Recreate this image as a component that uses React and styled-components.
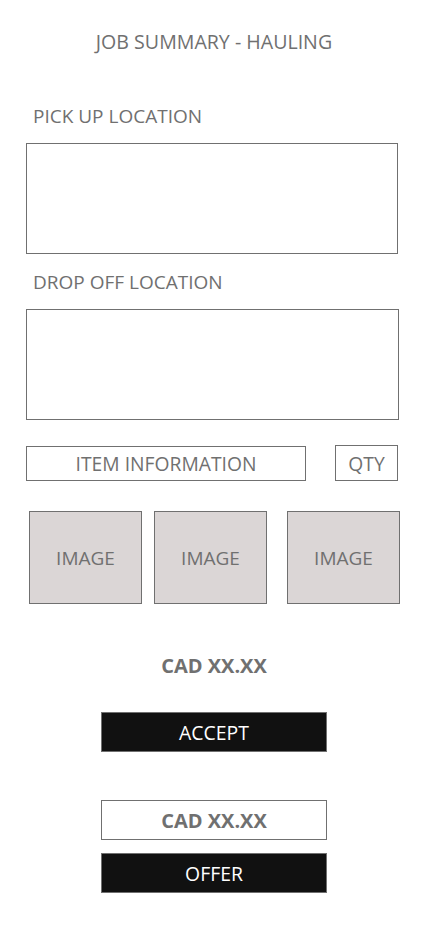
import React from 'react';
import styled, { createGlobalStyle } from 'styled-components';

const GlobalStyle = createGlobalStyle`
  html, body {
    margin: 0;
    padding: 0;
    background: #ffffff;
  }
  body {
    font-family: 'Open Sans', 'Noto Sans', sans-serif;
    color: #707070;
  }
  * {
    box-sizing: border-box;
  }
`;

const Page = styled.div`
  width: 428px;
  min-height: 926px;
  padding-top: 30px;
  display: flex;
  flex-direction: column;
`;

const Title = styled.h1`
  margin: 0;
  font-size: 19.6px;
  font-weight: 400;
  line-height: 24px;
  text-align: center;
  color: #707070;
`;

const Form = styled.div`
  display: flex;
  flex-direction: column;
  padding: 0 30px 0 26px;
`;

const Label = styled.div`
  margin-top: ${(p) => p.$top}px;
  padding-left: 7px;
  font-size: 19px;
  line-height: 24px;
`;

const AddressBox = styled.div`
  margin-top: 15px;
  width: ${(p) => p.$width || 372}px;
  height: 111px;
  border: 1px solid #707070;
  background: #fff;
`;

const ItemRow = styled.div`
  margin-top: 25px;
  display: flex;
  align-items: flex-start;
  justify-content: space-between;
`;

const OutlineBox = styled.div`
  width: ${(p) => p.$width}px;
  height: ${(p) => p.$height}px;
  margin-top: ${(p) => p.$top || 0}px;
  border: 1px solid #707070;
  display: flex;
  align-items: center;
  justify-content: center;
  font-size: 19.3px;
`;

const ImageRow = styled.div`
  margin-top: 30px;
  padding-left: 3px;
  display: flex;
`;

const ImageTile = styled.div`
  flex-shrink: 0;
  width: 113px;
  height: 93px;
  margin-left: ${(p) => p.$gap || 0}px;
  background: #dbd6d6;
  border: 1px solid #707070;
  display: flex;
  align-items: center;
  justify-content: center;
  font-size: 19px;
`;

const Actions = styled.div`
  display: flex;
  flex-direction: column;
  align-items: center;
`;

const Price = styled.div`
  margin-top: 50px;
  font-size: 20px;
  font-weight: 700;
  line-height: 24px;
`;

const ActionButton = styled.button`
  width: 226px;
  height: 40px;
  margin-top: ${(p) => p.$top}px;
  padding: 0;
  background: #111111;
  border: 1px solid #707070;
  color: #ffffff;
  font-family: inherit;
  font-size: 19.4px;
  cursor: pointer;
`;

const PriceInput = styled.div`
  width: 226px;
  height: 40px;
  margin-top: 48px;
  border: 1px solid #707070;
  display: flex;
  align-items: center;
  justify-content: center;
  font-size: 20px;
  font-weight: 700;
`;

const App = () => {
  return (
    <Page>
      <GlobalStyle />
      <Title>JOB SUMMARY - HAULING</Title>
      <Form>
        <Label $top={50}>PICK UP LOCATION</Label>
        <AddressBox />
        <Label $top={16}>DROP OFF LOCATION</Label>
        <AddressBox $width={373} />
        <ItemRow>
          <OutlineBox $width={280} $height={35} $top={1}>ITEM INFORMATION</OutlineBox>
          <OutlineBox $width={63} $height={36}>QTY</OutlineBox>
        </ItemRow>
        <ImageRow>
          <ImageTile>IMAGE</ImageTile>
          <ImageTile $gap={12}>IMAGE</ImageTile>
          <ImageTile $gap={20}>IMAGE</ImageTile>
        </ImageRow>
      </Form>
      <Actions>
        <Price>CAD XX.XX</Price>
        <ActionButton $top={34}>ACCEPT</ActionButton>
        <PriceInput>CAD XX.XX</PriceInput>
        <ActionButton $top={13}>OFFER</ActionButton>
      </Actions>
    </Page>
  );
};

export default App;
